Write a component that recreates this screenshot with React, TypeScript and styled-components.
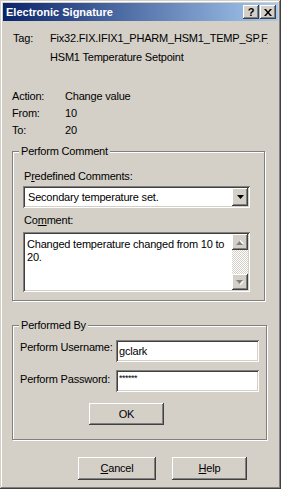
import React from 'react'
import styled, { createGlobalStyle, css } from 'styled-components'

const FACE = '#d4d0c8'
const SHADOW = '#808080'
const DARK = '#404040'
const LIGHT = '#ffffff'

const GlobalStyle = createGlobalStyle`
    html, body {
        margin: 0;
        padding: 0;
        background: ${FACE};
    }
    body {
        font-family: "Liberation Sans", Arial, sans-serif;
        font-size: 11px;
        line-height: 13px;
        letter-spacing: -0.2px;
        color: #000;
    }
`

const raised = css`
    background: ${FACE};
    box-shadow: inset -1px -1px ${DARK}, inset 1px 1px ${LIGHT}, inset -2px -2px ${SHADOW},
        inset 2px 2px ${FACE};
`

const sunken = css`
    background: #fff;
    box-shadow: inset 1px 1px ${SHADOW}, inset -1px -1px ${LIGHT}, inset 2px 2px ${DARK},
        inset -2px -2px ${FACE};
`

const Window = styled.div`
    width: 281px;
    height: 489px;
    box-sizing: border-box;
    padding: 3px;
    background: ${FACE};
    box-shadow: inset -1px -1px ${DARK}, inset 1px 1px ${FACE}, inset -2px -2px ${SHADOW},
        inset 2px 2px ${LIGHT};
    display: flex;
    flex-direction: column;
`

const TitleBar = styled.div`
    height: 18px;
    flex: none;
    display: flex;
    align-items: center;
    padding: 0 2px 0 3px;
    background: linear-gradient(to right, #0a246a, #a6caf0);
`

const TitleText = styled.div`
    flex: 1;
    color: #fff;
    font-weight: bold;
    letter-spacing: 0;
`

const CaptionButton = styled.div<{ gap?: number }>`
    ${raised};
    width: 16px;
    height: 14px;
    margin-left: ${p => p.gap ?? 0}px;
    display: flex;
    align-items: center;
    justify-content: center;
    font-weight: bold;
    font-size: 11px;
    letter-spacing: 0;
`

const Body = styled.div`
    flex: 1;
    display: flex;
    flex-direction: column;
    align-items: flex-start;
    padding: 11px 0 0 9px;
`

const InfoGrid = styled.div<{ labelWidth: number; rowGap: number; top: number; indent?: number }>`
    display: grid;
    grid-template-columns: ${p => p.labelWidth}px 218px;
    row-gap: ${p => p.rowGap}px;
    margin-top: ${p => p.top}px;
    margin-left: ${p => p.indent ?? 0}px;
    white-space: nowrap;
`

const Value = styled.div`
    overflow: hidden;
`

const GroupBox = styled.div<{ width: number; top: number }>`
    position: relative;
    box-sizing: border-box;
    width: ${p => p.width}px;
    margin-top: ${p => p.top}px;
    border: 1px solid ${SHADOW};
    box-shadow: 1px 1px 0 ${LIGHT}, inset 1px 1px 0 ${LIGHT};
`

const Legend = styled.div`
    position: absolute;
    top: -7px;
    left: 6px;
    padding: 0 2px 0 2px;
    background: ${FACE};
`

const CommentBody = styled.div`
    display: flex;
    flex-direction: column;
    padding: 18px 0 8px 10px;
`

const FieldLabel = styled.div<{ top?: number }>`
    margin: ${p => p.top ?? 0}px 0 0 1px;
`

const Combo = styled.div`
    ${sunken};
    box-sizing: border-box;
    width: 227px;
    height: 22px;
    margin-top: 3px;
    padding: 2px;
    display: flex;
    align-items: center;
`

const ComboText = styled.div`
    flex: 1;
    padding-left: 3px;
`

const DropButton = styled.div`
    ${raised};
    width: 16px;
    height: 18px;
    display: flex;
    align-items: center;
    justify-content: center;
`

const TextArea = styled.div`
    ${sunken};
    box-sizing: border-box;
    width: 227px;
    height: 60px;
    margin-top: 5px;
    padding: 2px;
    display: flex;
`

const TextAreaContent = styled.div`
    flex: 1;
    padding: 4px 4px 0 2px;
`

const ScrollBar = styled.div`
    width: 16px;
    display: flex;
    flex-direction: column;
`

const ScrollArrow = styled.div`
    ${raised};
    height: 16px;
    display: flex;
    align-items: center;
    justify-content: center;
`

const ScrollTrack = styled.div`
    flex: 1;
    background-image: repeating-conic-gradient(${LIGHT} 0% 25%, ${FACE} 0% 50%);
    background-size: 2px 2px;
`

const LoginBody = styled.div`
    display: flex;
    flex-direction: column;
    align-items: flex-start;
    padding: 14px 0 14px 6px;
`

const LoginGrid = styled.div`
    display: grid;
    grid-template-columns: 97px 143px;
    row-gap: 8px;
    align-items: start;
`

const Input = styled.div`
    ${sunken};
    box-sizing: border-box;
    height: 22px;
    padding: 2px 3px;
    display: flex;
    align-items: center;
`

const Masked = styled.span`
    font-size: 9px;
    letter-spacing: -0.5px;
    margin-top: -5px;
`

const PushButton = styled.div<{ width: number; height: number; left?: number }>`
    ${raised};
    box-sizing: border-box;
    width: ${p => p.width}px;
    height: ${p => p.height}px;
    margin-left: ${p => p.left ?? 0}px;
    display: flex;
    align-items: center;
    justify-content: center;
`

const ButtonRow = styled.div`
    display: flex;
    gap: 16px;
    margin: 17px 0 0 66px;
`

const CloseGlyph = () => (
    <svg width="8" height="7" viewBox="0 0 8 7">
        <path d="M0 0h2l2 2.5L6 0h2L5 3.5 8 7H6L4 4.5 2 7H0l3-3.5z" fill="#000" />
    </svg>
)

const DownTriangle = () => (
    <svg width="7" height="4" viewBox="0 0 7 4">
        <path d="M0 0h7L3.5 4z" fill="#000" />
    </svg>
)

const DisabledArrow = ({ up }: { up?: boolean }) => (
    <svg width="8" height="5" viewBox="0 0 8 5">
        <g transform={up ? 'translate(0 5) scale(1 -1)' : undefined}>
            <path d="M1 1h7L4.5 5z" fill={LIGHT} />
            <path d="M0 0h7L3.5 4z" fill={SHADOW} />
        </g>
    </svg>
)

const App = () => (
    <>
        <GlobalStyle />
        <Window>
            <TitleBar>
                <TitleText>Electronic Signature</TitleText>
                <CaptionButton>?</CaptionButton>
                <CaptionButton gap={1}>
                    <CloseGlyph />
                </CaptionButton>
            </TitleBar>
            <Body>
                <InfoGrid labelWidth={37} rowGap={6} top={0} indent={1}>
                    <div>Tag:</div>
                    <Value>Fix32.FIX.IFIX1_PHARM_HSM1_TEMP_SP.F_CV</Value>
                    <div />
                    <Value>HSM1 Temperature Setpoint</Value>
                </InfoGrid>
                <InfoGrid labelWidth={53} rowGap={4} top={26}>
                    <div>Action:</div>
                    <Value>Change value</Value>
                    <div>From:</div>
                    <Value>10</Value>
                    <div>To:</div>
                    <Value>20</Value>
                </InfoGrid>

                <GroupBox width={253} top={14}>
                    <Legend>Perform Comment</Legend>
                    <CommentBody>
                        <FieldLabel>
                            P<u>r</u>edefined Comments:
                        </FieldLabel>
                        <Combo>
                            <ComboText>Secondary temperature set.</ComboText>
                            <DropButton>
                                <DownTriangle />
                            </DropButton>
                        </Combo>
                        <FieldLabel top={6}>
                            Co<u>m</u>ment:
                        </FieldLabel>
                        <TextArea>
                            <TextAreaContent>Changed temperature changed from 10 to 20.</TextAreaContent>
                            <ScrollBar>
                                <ScrollArrow>
                                    <DisabledArrow up />
                                </ScrollArrow>
                                <ScrollTrack />
                                <ScrollArrow>
                                    <DisabledArrow />
                                </ScrollArrow>
                            </ScrollBar>
                        </TextArea>
                    </CommentBody>
                </GroupBox>

                <GroupBox width={255} top={24}>
                    <Legend>Performed By</Legend>
                    <LoginBody>
                        <LoginGrid>
                            <FieldLabel top={1}>Perform Username:</FieldLabel>
                            <Input>gclark</Input>
                            <FieldLabel top={3}>Perform Password:</FieldLabel>
                            <Input>
                                <Masked>******</Masked>
                            </Input>
                        </LoginGrid>
                        <PushButton width={75} height={22} left={70} style={{ marginTop: 11 }}>
                            OK
                        </PushButton>
                    </LoginBody>
                </GroupBox>

                <ButtonRow>
                    <PushButton width={78} height={23}>
                        <span>
                            <u>C</u>ancel
                        </span>
                    </PushButton>
                    <PushButton width={75} height={23}>
                        <span>
                            <u>H</u>elp
                        </span>
                    </PushButton>
                </ButtonRow>
            </Body>
        </Window>
    </>
)

export default App
